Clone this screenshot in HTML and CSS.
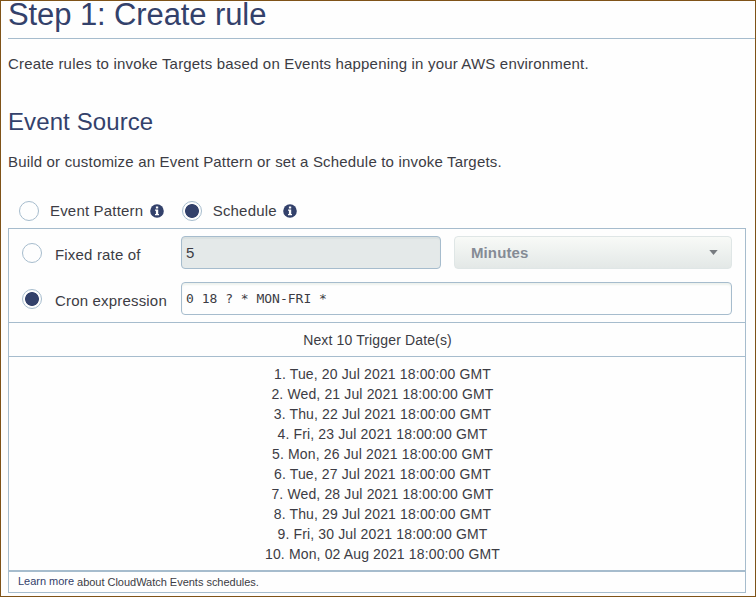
FILE: index.html
```html
<!DOCTYPE html>
<html lang="en">
<head>
<meta charset="utf-8">
<title>Create rule</title>
<link rel="stylesheet" href="styles.css">
</head>
<body>
<main class="page">
  <h1 class="title">Step 1: Create rule</h1>
  <p class="intro">Create rules to invoke Targets based on Events happening in your AWS environment.</p>
  <h2 class="subtitle">Event Source</h2>
  <p class="intro">Build or customize an Event Pattern or set a Schedule to invoke Targets.</p>
  <div class="source">
    <span class="radio"></span>
    <span class="source-label">Event Pattern</span>
    <svg class="info" viewBox="0 0 14 14"><circle cx="7" cy="7" r="6.8"/><path d="M5.900 2.400h2.300v2H5.900zM5 5.400h3.200v4.500H9v1.300H5V9.900h.9V6.700H5z"/></svg>
    <span class="radio checked"></span>
    <span class="source-label">Schedule</span>
    <svg class="info" viewBox="0 0 14 14"><circle cx="7" cy="7" r="6.8"/><path d="M5.900 2.400h2.300v2H5.900zM5 5.400h3.200v4.500H9v1.300H5V9.900h.9V6.700H5z"/></svg>
  </div>
  <section class="panel">
    <div class="form">
      <div class="row">
        <span class="radio"></span>
        <span class="row-label">Fixed rate of</span>
        <div class="field disabled">5</div>
        <div class="select"><span>Minutes</span><svg class="caret" viewBox="0 0 10 6"><path d="M0 0h10L5 6z"/></svg></div>
      </div>
      <div class="row">
        <span class="radio checked"></span>
        <span class="row-label">Cron expression</span>
        <div class="field cron">0 18 ? * MON-FRI *</div>
      </div>
    </div>
    <div class="dates-head">Next 10 Trigger Date(s)</div>
    <div class="dates">
      <div>1. Tue, 20 Jul 2021 18:00:00 GMT</div>
      <div>2. Wed, 21 Jul 2021 18:00:00 GMT</div>
      <div>3. Thu, 22 Jul 2021 18:00:00 GMT</div>
      <div>4. Fri, 23 Jul 2021 18:00:00 GMT</div>
      <div>5. Mon, 26 Jul 2021 18:00:00 GMT</div>
      <div>6. Tue, 27 Jul 2021 18:00:00 GMT</div>
      <div>7. Wed, 28 Jul 2021 18:00:00 GMT</div>
      <div>8. Thu, 29 Jul 2021 18:00:00 GMT</div>
      <div>9. Fri, 30 Jul 2021 18:00:00 GMT</div>
      <div>10. Mon, 02 Aug 2021 18:00:00 GMT</div>
    </div>
    <div class="footer"><a class="learn">Learn more</a><span>about CloudWatch Events schedules.</span></div>
  </section>
</main>
</body>
</html>
```

FILE: styles.css
```css
* { box-sizing: border-box; }
body {
  margin: 0;
  background: #fefefe;
  color: #3c3c44;
  font: 15px/20px "Liberation Sans", Arial, sans-serif;
  letter-spacing: 0.18px;
}
.page {
  height: 597px;
  border: 1px solid #7f5318;
  padding-left: 7px;
}
h1, h2, p { margin: 0; font-weight: 400; }
.title {
  height: 38px;
  border-bottom: 1px solid #a6bccd;
  color: #33416b;
  font-size: 31px;
  line-height: 28px;
  letter-spacing: -0.1px;
}
.intro { height: 20px; margin-top: 15px; }
.subtitle {
  height: 30px;
  margin-top: 33px;
  color: #33416b;
  font-size: 24px;
  line-height: 30px;
  letter-spacing: 0.1px;
}
.source {
  display: flex;
  align-items: center;
  height: 20px;
  margin-top: 29px;
  padding-left: 11px;
}
.radio {
  flex: none;
  width: 20px;
  height: 20px;
  border: 1px solid #a6bccd;
  border-radius: 50%;
  background: #fefefe;
}
.checked { background: radial-gradient(circle, #33416b 6.5px, #fefefe 7.3px); }
.source-label { margin-left: 11px; }
.info { flex: none; width: 14px; height: 14px; margin: 0 18px 0 6.5px; }
.info circle { fill: #33416b; }
.info path { fill: #fefefe; }
.panel {
  width: 738px;
  height: 365px;
  margin-top: 7px;
  border: 1px solid #a6bccd;
}
.form { height: 94px; padding: 7px 13px 0; border-bottom: 1px solid #a6bccd; }
.row { display: flex; height: 33px; margin-bottom: 13px; }
.row .radio { margin-top: 7px; }
.row-label { width: 126px; margin: 9px 0 0 13px; }
.field {
  width: 260px;
  height: 33px;
  padding-left: 4px;
  border: 1px solid #a6bccd;
  border-radius: 4px;
  line-height: 32px;
  background: #fefefe;
}
.disabled { background: #e4e9e9; box-shadow: inset 0 2px 1px #d9e0e0; }
.cron {
  width: 551px;
  font: 13px/32px "DejaVu Sans Mono", monospace;
  letter-spacing: 0;
  box-shadow: inset 0 2px 2px #eef2ee;
}
.select {
  display: flex;
  align-items: center;
  justify-content: space-between;
  width: 278px;
  height: 33px;
  margin-left: 13px;
  padding: 0 13px 0 16px;
  border: 1px solid #dfe6e6;
  border-radius: 4px;
  background: linear-gradient(#f8faf7, #e3e8e7);
  color: #858b95;
  font-weight: 700;
  letter-spacing: 0.1px;
}
.caret { width: 9px; height: 5px; fill: #777b80; }
.dates-head {
  height: 34px;
  padding-left: 1px;
  border-bottom: 1px solid #a6bccd;
  font-size: 14px;
  line-height: 34px;
  letter-spacing: 0.14px;
  text-align: center;
}
.dates {
  height: 215px;
  padding: 7px 0 0 11px;
  border-bottom: 2px solid #a6bccd;
  font-size: 14px;
  letter-spacing: 0.14px;
  text-align: center;
}
.footer {
  display: flex;
  gap: 3px;
  padding-left: 9px;
  font-size: 11px;
  line-height: 21px;
  letter-spacing: -0.02px;
}
.learn { color: #33416b; line-height: 19px; }
```
